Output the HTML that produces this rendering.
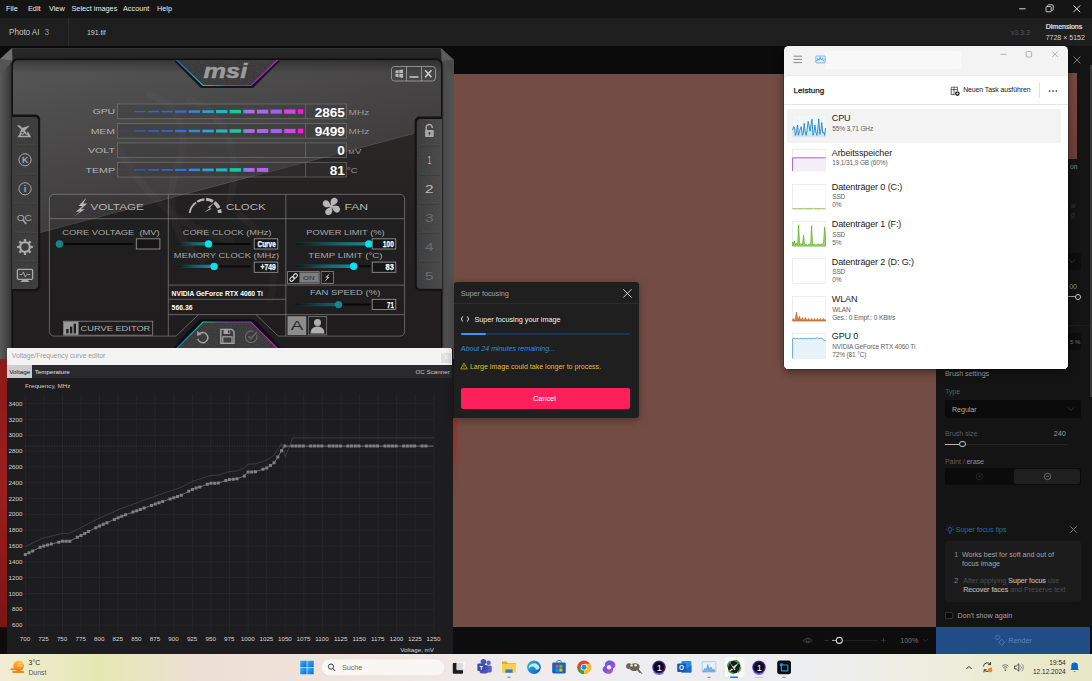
<!DOCTYPE html>
<html lang="en">
<head>
<meta charset="utf-8">
<title>Photo AI</title>
<style>
*{box-sizing:border-box;margin:0;padding:0}
html,body{width:1092px;height:681px;overflow:hidden;background:#0c0c0c}
body{position:relative;font-family:"Liberation Sans",sans-serif;font-size:7px;color:#ddd;line-height:1}
.abs,.abs *{position:absolute}
.abs .st{position:static}
.t{position:absolute;white-space:nowrap;line-height:1}
#root{position:absolute;left:0;top:0;width:1092px;height:681px;overflow:hidden}
#menubar{left:0;top:0;width:1092px;height:18px;background:#151515}
#menubar .t{top:5.2px;font-size:7.3px;color:#ececec}
#tabbar{left:0;top:18px;width:1092px;height:28px;background:#1f1f1f}
#strip{left:0;top:46px;width:1092px;height:27.5px;background:#0b0b0b}
#canvas{left:0;top:73.5px;width:936px;height:553.5px;background:#734d44}
#canvasred{left:0;top:73.5px;width:9px;height:553.5px;background:linear-gradient(180deg,#8c1a18 0,#8a1a18 50%,#9a201e 75%,#7c1513 100%)}
#canvasred2{left:452px;top:410px;width:7px;height:90px;background:linear-gradient(90deg,#a02422 0,#90342c 40%,rgba(130,60,50,0) 100%);-webkit-mask-image:linear-gradient(180deg,#000 0,#000 25%,transparent 100%);mask-image:linear-gradient(180deg,#000 0,#000 25%,transparent 100%)}
#rpanel{left:936px;top:46px;width:156px;height:581px;background:#141414}
#bbar{left:0;top:627px;width:936px;height:27px;background:#0d0d0d}
#render{left:936px;top:627px;width:154px;height:27px;background:#204d86}
#taskbar{left:0;top:654px;width:1092px;height:27px;background:linear-gradient(90deg,#f2ecd6 0,#e5e8b2 9%,#ecdfd4 18%,#f0e6e0 35%,#eeecee 50%,#edeef2 72%,#eeeee0 85%,#eaeacc 94%,#e8e8c8 100%)}
</style>
</head>
<body>
<div id="root">
<div id="menubar" class="abs">
  <span class="t" style="left:6px">File</span>
  <span class="t" style="left:28px">Edit</span>
  <span class="t" style="left:49px">View</span>
  <span class="t" style="left:71.5px">Select images</span>
  <span class="t" style="left:123px">Account</span>
  <span class="t" style="left:157px">Help</span>
</div>
<div id="tabbar" class="abs"></div>
<div id="strip" class="abs"></div>
<div id="canvas" class="abs"></div>
<div id="canvasred" class="abs"></div>
<div id="canvasred2" class="abs"></div>
<div id="rpanel" class="abs"></div>
<div id="bbar" class="abs"></div>
<div id="render" class="abs"></div>
<div id="tabc" class="abs" style="left:0;top:18px;width:1092px;height:28px">
<span class="t" id="t1" style="left:9px;top:10.6px;font-size:8.2px;color:#c2c2c2;letter-spacing:-0.06px">Photo AI</span>
<span class="t" style="left:44.6px;top:10.6px;font-size:8.2px;color:#9a9a9a">3</span>
<div style="left:67.6px;top:0;width:0.8px;height:28px;background:#2a2a2a"></div>
<span class="t" id="t2" style="left:87px;top:11.2px;font-size:7px;color:#cfcfcf;letter-spacing:-0.05px">191.tif</span>
<span class="t" id="t3" style="left:1011px;top:12px;font-size:6.9px;color:#555">v3.3.3</span>
<span class="t" id="t4" style="left:1045.7px;top:5.2px;font-size:7px;color:#e6e6e6;-webkit-text-stroke:0.2px #e6e6e6">Dimensions</span>
<span class="t" id="t5" style="left:1045.7px;top:16.4px;font-size:7px;color:#d2d2d2">7728 × 5152</span>
</div>
<svg style="position:absolute;left:1010px;top:0" width="82" height="18" viewBox="1010 0 82 18"><path d="M1019.2 8.8h6.4" stroke="#f0f0f0" stroke-width="0.9"/><rect x="1046" y="6.6" width="5.2" height="5.2" rx="0.9" fill="none" stroke="#f0f0f0" stroke-width="0.8"/><path d="M1047.6 6.4v-0.6a1 1 0 0 1 1-1h3.6a1 1 0 0 1 1 1v3.6a1 1 0 0 1 -1 1h-0.6" fill="none" stroke="#f0f0f0" stroke-width="0.8"/><path d="M1073.4 5.4l6.8 6.8M1080.2 5.4l-6.8 6.8" stroke="#f0f0f0" stroke-width="0.9"/></svg>
<div id="rp" class="abs" style="left:936px;top:46px;width:156px;height:581px">
<svg style="left:136px;top:9px" width="10" height="10" viewBox="0 0 10 10"><path d="M1.6 1.6l6.8 6.8M8.4 1.6l-6.8 6.8" stroke="#8a8a8a" stroke-width="0.9"/></svg>
<div style="left:131.4px;top:27px;width:9.4px;height:85.5px;background:linear-gradient(180deg,#7b4a41,#6d4038)"></div>
<span class="t" id="r0" style="left:134.0px;top:118.4px;font-size:6.6px;color:#8c8c8c;">on</span>
<span class="t" id="r0b" style="left:135.0px;top:157.0px;font-size:6.4px;color:#3a3a3a;font-style:italic">w</span>
<span class="t" id="r0c" style="left:135.0px;top:166.2px;font-size:6.4px;color:#3a3a3a;font-style:italic">g</span>
<div style="left:125px;top:206.5px;width:20.2px;height:17.5px;background:#0d0d0d;border-radius:2px"></div>
<svg style="left:131.6px;top:212px" width="8" height="6" viewBox="0 0 8 6"><path d="M1.2 1.6L4 4.4L6.8 1.6" fill="none" stroke="#444" stroke-width="0.8"/></svg>
<span class="t" id="r0d" style="left:133.2px;top:237.1px;font-size:7px;color:#8c8c8c;">00</span>
<div style="left:126px;top:250.2px;width:13px;height:0.9px;background:#aaa"></div>
<div style="left:138.6px;top:247.6px;width:6.2px;height:6.2px;border:1px solid #c8c8c8;border-radius:50%;background:#141414"></div>
<div style="left:0;top:279px;width:156px;height:0.7px;background:#1f1f1f"></div>
<div style="left:125px;top:286.5px;width:20.2px;height:17.5px;background:#0d0d0d;border-radius:2px"></div>
<span class="t" id="r0e" style="left:134.0px;top:292.6px;font-size:6px;color:#777;">5 %</span>
<div style="left:154.2px;top:19px;width:1.8px;height:332px;background:#383838"></div>
<span class="t" id="r1" style="left:8.9px;top:323.9px;font-size:7.2px;color:#a2a2a2;letter-spacing:-0.1px">Brush settings</span>
<span class="t" id="r2" style="left:8.9px;top:341.6px;font-size:7.2px;color:#5c5c5c;letter-spacing:-0.1px">Type</span>
<div style="left:8.9px;top:353.8px;width:136.3px;height:18.2px;background:#0b0b0b;border-radius:2px"></div>
<span class="t" id="r3" style="left:16.0px;top:359.6px;font-size:7.2px;color:#a8a8a8;letter-spacing:-0.1px">Regular</span>
<svg style="left:131.4px;top:359.6px" width="8" height="6" viewBox="0 0 8 6"><path d="M1 1.4L4 4.4L7 1.4" fill="none" stroke="#3a3a3a" stroke-width="0.8"/></svg>
<span class="t" id="r4" style="left:8.9px;top:384.0px;font-size:7.2px;color:#5c5c5c;letter-spacing:-0.1px">Brush size</span>
<span class="t" id="r5" style="left:117.7px;top:384.2px;font-size:7.2px;color:#9c9c9c;">240</span>
<div style="left:9px;top:397.6px;width:123px;height:0.8px;background:#262626"></div>
<div style="left:9px;top:397.5px;width:15px;height:1px;background:#b4b4b4"></div>
<div style="left:23.4px;top:394.8px;width:6.4px;height:6.4px;border:1.1px solid #c8c8c8;border-radius:50%;background:#141414"></div>
<span class="t" id="r6" style="left:8.9px;top:411.5px;font-size:7.2px;color:#5c5c5c;letter-spacing:-0.1px">Paint / <span class="st" style="color:#8e8e8e">erase</span></span>
<div style="left:8.9px;top:421.6px;width:136.3px;height:17.8px;background:#0b0b0b;border-radius:2px"></div>
<div style="left:77.6px;top:422.6px;width:66.6px;height:15.8px;background:#1f1f1f;border-radius:2px"></div>
<svg style="left:39px;top:426px" width="9" height="9" viewBox="0 0 9 9"><circle cx="4.5" cy="4.5" r="3.2" fill="none" stroke="#2e2e2e" stroke-width="0.7"/><path d="M3 4.5h3M4.5 3v3" stroke="#2e2e2e" stroke-width="0.6"/></svg>
<svg style="left:106.6px;top:426px" width="9" height="9" viewBox="0 0 9 9"><circle cx="4.5" cy="4.5" r="3.2" fill="none" stroke="#8a8a8a" stroke-width="0.7"/><path d="M3 4.5h3" stroke="#8a8a8a" stroke-width="0.6"/></svg>
<svg style="left:9.2px;top:478.600px" width="10" height="10" viewBox="0 0 10 10"><circle cx="5" cy="4.400" r="2" fill="none" stroke="#2a68b0" stroke-width="0.750"/><path d="M4 7.300h2M4.300 8.500h1.400" stroke="#2a68b0" stroke-width="0.700"/><path d="M0.800 4.400h1.100M8.100 4.400h1.100M5 0.400v1M2 1.500l.8.800M8 1.500l-.8.800" stroke="#2a68b0" stroke-width="0.600"/></svg>
<span class="t" id="r7" style="left:19.8px;top:479.9px;font-size:7.2px;color:#2a68b0;letter-spacing:-0.05px">Super focus tips</span>
<svg style="left:132.8px;top:478.8px" width="9" height="9" viewBox="0 0 9 9"><path d="M1.3 1.3l6.4 6.4M7.7 1.3l-6.4 6.4" stroke="#8c8c8c" stroke-width="0.8"/></svg>
<div style="left:8.9px;top:495.3px;width:136.3px;height:61px;background:#1c1c1c;border-radius:3px"></div>
<span class="t" id="r8a" style="left:18.3px;top:505.9px;font-size:7.1px;color:#8a8a8a;">1</span>
<span class="t" id="r8" style="left:26.0px;top:505.9px;font-size:7.1px;color:#a4a4a4;letter-spacing:-0.02px">Works best for soft and out of</span>
<span class="t" id="r9" style="left:26.0px;top:515.0px;font-size:7.1px;color:#a4a4a4;letter-spacing:-0.02px">focus image</span>
<span class="t" id="r10a" style="left:18.3px;top:531.9px;font-size:7.1px;color:#8a8a8a;">2</span>
<span class="t" id="r10" style="left:27.2px;top:531.9px;font-size:7.1px;color:#4c4c4c;letter-spacing:-0.02px">After applying <span class="st" style="color:#b4b4b4;-webkit-text-stroke:0.15px #b4b4b4">Super focus</span> use</span>
<span class="t" id="r11" style="left:27.2px;top:540.9px;font-size:7.1px;color:#4c4c4c;letter-spacing:-0.02px"><span class="st" style="color:#b4b4b4;-webkit-text-stroke:0.15px #b4b4b4">Recover faces</span> and Preserve text</span>
<div style="left:9.2px;top:565.5px;width:7.8px;height:7.8px;border:0.8px solid #303030;border-radius:1px;background:#0b0b0b"></div>
<span class="t" id="r12" style="left:21.6px;top:566.2px;font-size:7.2px;color:#a0a0a0;letter-spacing:-0.02px">Don't show again</span>
</div>
<svg style="position:absolute;left:994px;top:634px" width="12" height="13" viewBox="0 0 12 13"><rect x="1.6" y="1.6" width="3.6" height="3.6" transform="rotate(45 3.4 3.4)" fill="none" stroke="#5a82b6" stroke-width="0.8"/><rect x="5.6" y="6.2" width="4.2" height="4.2" transform="rotate(45 7.7 8.3)" fill="none" stroke="#5a82b6" stroke-width="0.8"/></svg>
<span class="t" id="rb" style="left:1008.3px;top:636.9px;font-size:7.2px;color:#5c84b8">Render</span>
<svg style="position:absolute;left:800px;top:632px" width="136" height="17" viewBox="800 632 136 17"><path d="M803.2 640.4q4.5-4.6 9 0q-4.5 4.6-9 0z" fill="none" stroke="#4a4a4a" stroke-width="0.8"/><circle cx="807.7" cy="640.4" r="1.5" fill="none" stroke="#4a4a4a" stroke-width="0.8"/><path d="M824.4 640.4h4.4" stroke="#3a3a3a" stroke-width="0.8"/><path d="M832 640.4h4" stroke="#c8c8c8" stroke-width="0.9"/><path d="M842.6 640.4h35" stroke="#2a2a2a" stroke-width="0.8"/><circle cx="839.3" cy="640.4" r="3" fill="#0d0d0d" stroke="#d0d0d0" stroke-width="1.1"/><path d="M881 640.4h5M883.5 637.9v5" stroke="#3a3a3a" stroke-width="0.8"/><path d="M922.8 639l2.6 2.6 2.6-2.6" fill="none" stroke="#333" stroke-width="0.8"/></svg>
<span class="t" id="bz" style="left:900.3px;top:637px;font-size:7px;color:#7a7a7a">100%</span>
<svg id="msi" style="position:absolute;left:0;top:48px" width="454" height="312" viewBox="0 48 454 312" font-family="Liberation Sans, sans-serif">
<defs>
  <linearGradient id="gL" x1="0" x2="1" y1="0" y2="0"><stop offset="0" stop-color="#5a5a5a"/><stop offset="0.75" stop-color="#3d3d3d"/><stop offset="1" stop-color="#2c2c2c"/></linearGradient>
  <linearGradient id="gR" x1="0" x2="1" y1="0" y2="0"><stop offset="0" stop-color="#3a3a3a"/><stop offset="0.25" stop-color="#4b4b4b"/><stop offset="1" stop-color="#535353"/></linearGradient>
  <linearGradient id="gTop" x1="0" x2="0" y1="0" y2="1"><stop offset="0" stop-color="#3a3a3a"/><stop offset="0.12" stop-color="#282828"/><stop offset="1" stop-color="#232323"/></linearGradient>
  <linearGradient id="gIn" gradientUnits="userSpaceOnUse" x1="13" y1="61" x2="77" y2="308"><stop offset="0" stop-color="#575656"/><stop offset="1" stop-color="#343232"/></linearGradient>
  <linearGradient id="gDark" x1="0" x2="0" y1="0" y2="1"><stop offset="0" stop-color="#2a2727"/><stop offset="0.4" stop-color="#232121"/><stop offset="1" stop-color="#1f1d1d"/></linearGradient>
  <linearGradient id="gRainbowT" x1="176" x2="278" y1="0" y2="0" gradientUnits="userSpaceOnUse"><stop offset="0" stop-color="#1f5fd8"/><stop offset="0.27" stop-color="#18c8a8"/><stop offset="0.5" stop-color="#6a48d0"/><stop offset="0.75" stop-color="#9a2cc8"/><stop offset="1" stop-color="#d818c8"/></linearGradient>
  <linearGradient id="gTealFade" x1="0" x2="1" y1="0" y2="0"><stop offset="0" stop-color="#17888f" stop-opacity="0.12"/><stop offset="0.5" stop-color="#178e96" stop-opacity="0.7"/><stop offset="1" stop-color="#17a0a8"/></linearGradient>
  <linearGradient id="gSeg10" x1="0" x2="1" y1="0" y2="0"><stop offset="0" stop-color="#5a90d8"/><stop offset="0.6" stop-color="#b468f0"/><stop offset="1" stop-color="#c060f4"/></linearGradient>
  <linearGradient id="gTopSh" x1="0" x2="0" y1="0" y2="1"><stop offset="0" stop-color="#000" stop-opacity="0.32"/><stop offset="1" stop-color="#000" stop-opacity="0"/></linearGradient>
  <linearGradient id="gRT" x1="0" x2="1" y1="0" y2="0"><stop offset="0" stop-color="#3b3a3a"/><stop offset="1" stop-color="#494848"/></linearGradient>
  <clipPath id="cIn"><rect x="13" y="60.200" width="428" height="291" rx="5"/></clipPath>
  <filter id="noise" x="0" y="0" width="100%" height="100%"><feTurbulence type="fractalNoise" baseFrequency="0.9" numOctaves="2" seed="3" result="n"/><feColorMatrix type="matrix" values="0 0 0 0 0.5  0 0 0 0 0.5  0 0 0 0 0.5  0.35 0.35 0.35 0 -0.35"/><feComposite in2="SourceGraphic" operator="in"/></filter>
</defs>
<polygon points="12,48 441,48 454,60 454,359 0,359 0,59" fill="#262626"/>
<rect x="0" y="59" width="12.5" height="300" fill="url(#gL)"/>
<rect x="441.5" y="60" width="12.5" height="299" fill="url(#gR)"/>
<polygon points="12,48 441,48 441,60 12,60" fill="url(#gTop)"/>
<polygon points="0,59 12,48 12.5,61" fill="#707070"/><polygon points="0,59 12.5,61 0,75" fill="#555"/>
<polygon points="441,48 454,60 441.5,61" fill="#5c5c5c"/><polygon points="454,60 441.5,61 454,76" fill="#4a4a4a"/>
<rect x="11.5" y="58.600" width="431" height="293" rx="6" fill="#0f0f0f"/>
<rect x="13" y="60.200" width="428" height="291" rx="5" fill="url(#gIn)"/>
<rect x="13" y="60.200" width="428" height="13" rx="5" fill="url(#gTopSh)"/>
<g clip-path="url(#cIn)"><polygon points="13,240 441,126.500 441,352 13,352" fill="url(#gDark)"/><polygon points="13,239.300 441,125.800 441,126.800 13,240.300" fill="#6a6868" opacity="0.4"/>
<g fill="none" stroke="#8a8888" stroke-opacity="0.07" stroke-width="7" stroke-linecap="round"><path d="M150 95c30 10 40 40 28 70s-10 70 25 95"/><path d="M190 100c40 15 50 60 40 100"/><path d="M120 150c20 40 60 80 110 90"/><path d="M240 215c25 20 40 50 30 85"/></g></g>
<polygon points="174,61 280,61 253,88 201,88" fill="#0c0c0c" opacity="0.85"/>
<polygon points="176.5,60 277.5,60 251,85.5 203,85.5" fill="#363636"/>
<polygon points="176.5,60 277.5,60 251,85.5 203,85.5" fill="#888" filter="url(#noise)" opacity="0.3"/>
<polyline points="176.5,60 203,85.5 251,85.5 277.5,60" fill="none" stroke="url(#gRainbowT)" stroke-width="1.1"/>
<text x="203.6" y="78" font-size="20.6" font-weight="bold" font-style="italic" fill="#9c9c9c" stroke="#9c9c9c" stroke-width="0.5" textLength="43.6" lengthAdjust="spacingAndGlyphs">msi</text>
<rect x="391.5" y="66.5" width="44" height="14.5" rx="3" fill="none" stroke="#9a9a9a" stroke-width="0.9"/>
<path d="M406.5 66.5V81M421.5 66.5V81" stroke="#9a9a9a" stroke-width="0.9"/>
<g fill="#b8b8b8"><polygon points="395.5,70.6 398.6,70.1 398.6,73.3 395.5,73.3"/><polygon points="399.3,70 403,69.4 403,73.3 399.3,73.3"/><polygon points="395.5,74 398.6,74 398.6,77.2 395.5,76.7"/><polygon points="399.3,74 403,74 403,77.9 399.3,77.3"/></g>
<rect x="409.5" y="76.2" width="9" height="1.6" fill="#c4c4c4"/>
<path d="M425.2 70.2l6.2 7M431.4 70.2l-6.2 7" stroke="#d0d0d0" stroke-width="1.5"/>
<rect x="117.5" y="104" width="229" height="14.7" fill="#3a3838" fill-opacity="0.35" stroke="#8a8888" stroke-opacity="0.6" stroke-width="0.8"/>
<path d="M305.6 104v14.7" stroke="#8a8888" stroke-opacity="0.6" stroke-width="0.8"/>
<text x="92.7" y="114.2" font-size="7.2" fill="#b4b4b4" textLength="22.3" lengthAdjust="spacingAndGlyphs">GPU</text>
<rect x="120.60" y="111.20" width="11.35" height="0.8" fill="#3a4a94" opacity="0.55"/>
<rect x="134.23" y="111.00" width="11.35" height="1.2" fill="#3a5cd0" opacity="1"/>
<rect x="147.86" y="110.85" width="11.35" height="1.5" fill="#3a5fd6" opacity="1"/>
<rect x="161.49" y="110.75" width="11.35" height="1.7" fill="#3a62da" opacity="1"/>
<rect x="175.12" y="110.50" width="11.35" height="2.2" fill="#3070e4" opacity="1"/>
<rect x="188.75" y="110.35" width="11.35" height="2.5" fill="#3088e4" opacity="1"/>
<rect x="202.38" y="110.25" width="11.35" height="2.7" fill="#2ea0dc" opacity="1"/>
<rect x="216.01" y="110.05" width="11.35" height="3.1" fill="#1fb8c4" opacity="1"/>
<rect x="229.64" y="109.85" width="11.35" height="3.5" fill="#18c8a0" opacity="1"/>
<rect x="243.27" y="109.75" width="11.35" height="3.7" fill="url(#gSeg10)"/>
<rect x="256.90" y="109.65" width="11.35" height="3.9" fill="#b062f2" opacity="1"/>
<rect x="270.53" y="109.55" width="11.35" height="4.1" fill="#a25ef4" opacity="1"/>
<rect x="284.16" y="109.45" width="11.35" height="4.3" fill="#d443f0" opacity="1"/>
<rect x="297.79" y="109.30" width="5.5" height="4.6" fill="#ff14e0" opacity="1"/>
<text x="344.6" y="116.5" font-size="13.6" font-weight="bold" fill="#fff" text-anchor="end" letter-spacing="-0.1">2865</text>
<rect x="117.5" y="123.4" width="229" height="14.7" fill="#3a3838" fill-opacity="0.35" stroke="#8a8888" stroke-opacity="0.6" stroke-width="0.8"/>
<path d="M305.6 123.4v14.7" stroke="#8a8888" stroke-opacity="0.6" stroke-width="0.8"/>
<text x="90.7" y="133.6" font-size="7.2" fill="#b4b4b4" textLength="24.3" lengthAdjust="spacingAndGlyphs">MEM</text>
<rect x="120.60" y="130.60" width="11.35" height="0.8" fill="#3a4a94" opacity="0.55"/>
<rect x="134.23" y="130.40" width="11.35" height="1.2" fill="#3a5cd0" opacity="1"/>
<rect x="147.86" y="130.25" width="11.35" height="1.5" fill="#3a5fd6" opacity="1"/>
<rect x="161.49" y="130.15" width="11.35" height="1.7" fill="#3a62da" opacity="1"/>
<rect x="175.12" y="129.90" width="11.35" height="2.2" fill="#3070e4" opacity="1"/>
<rect x="188.75" y="129.75" width="11.35" height="2.5" fill="#3088e4" opacity="1"/>
<rect x="202.38" y="129.65" width="11.35" height="2.7" fill="#2ea0dc" opacity="1"/>
<rect x="216.01" y="129.45" width="11.35" height="3.1" fill="#1fb8c4" opacity="1"/>
<rect x="229.64" y="129.25" width="11.35" height="3.5" fill="#18c8a0" opacity="1"/>
<rect x="243.27" y="129.15" width="11.35" height="3.7" fill="url(#gSeg10)"/>
<rect x="256.90" y="129.05" width="11.35" height="3.9" fill="#b062f2" opacity="1"/>
<rect x="270.53" y="128.95" width="11.35" height="4.1" fill="#a25ef4" opacity="1"/>
<rect x="284.16" y="128.85" width="11.35" height="4.3" fill="#d443f0" opacity="1"/>
<rect x="297.79" y="128.70" width="5.5" height="4.6" fill="#ff14e0" opacity="1"/>
<text x="344.6" y="135.9" font-size="13.6" font-weight="bold" fill="#fff" text-anchor="end" letter-spacing="-0.1">9499</text>
<rect x="117.5" y="142.9" width="229" height="14.7" fill="#3a3838" fill-opacity="0.35" stroke="#8a8888" stroke-opacity="0.6" stroke-width="0.8"/>
<path d="M305.6 142.9v14.7" stroke="#8a8888" stroke-opacity="0.6" stroke-width="0.8"/>
<text x="88" y="153.1" font-size="7.2" fill="#b4b4b4" textLength="27.0" lengthAdjust="spacingAndGlyphs">VOLT</text>
<text x="344.6" y="155.4" font-size="13.6" font-weight="bold" fill="#fff" text-anchor="end" letter-spacing="-0.1">0</text>
<rect x="117.5" y="162.3" width="229" height="14.7" fill="#3a3838" fill-opacity="0.35" stroke="#8a8888" stroke-opacity="0.6" stroke-width="0.8"/>
<path d="M305.6 162.3v14.7" stroke="#8a8888" stroke-opacity="0.6" stroke-width="0.8"/>
<text x="85.5" y="172.5" font-size="7.2" fill="#b4b4b4" textLength="29.5" lengthAdjust="spacingAndGlyphs">TEMP</text>
<rect x="120.60" y="169.50" width="11.35" height="0.8" fill="#3a4a94" opacity="0.55"/>
<rect x="134.23" y="169.30" width="11.35" height="1.2" fill="#3a5cd0" opacity="1"/>
<rect x="147.86" y="169.15" width="11.35" height="1.5" fill="#3a5fd6" opacity="1"/>
<rect x="161.49" y="169.05" width="11.35" height="1.7" fill="#3a62da" opacity="1"/>
<rect x="175.12" y="168.80" width="11.35" height="2.2" fill="#3070e4" opacity="1"/>
<rect x="188.75" y="168.65" width="11.35" height="2.5" fill="#3088e4" opacity="1"/>
<rect x="202.38" y="168.55" width="11.35" height="2.7" fill="#2ea0dc" opacity="1"/>
<rect x="216.01" y="168.35" width="11.35" height="3.1" fill="#1fb8c4" opacity="1"/>
<rect x="229.64" y="168.15" width="11.35" height="3.5" fill="#18c8a0" opacity="1"/>
<rect x="243.27" y="168.05" width="11.35" height="3.7" fill="url(#gSeg10)"/>
<rect x="256.90" y="167.95" width="11.35" height="3.9" fill="#b062f2" opacity="1"/>
<text x="344.6" y="174.8" font-size="13.6" font-weight="bold" fill="#fff" text-anchor="end" letter-spacing="-0.1">81</text>
<text x="348.6" y="115.0" font-size="7.4" fill="#9c9c9c" textLength="20.6" lengthAdjust="spacingAndGlyphs">MHz</text>
<text x="348.6" y="134.4" font-size="7.4" fill="#9c9c9c" textLength="20.6" lengthAdjust="spacingAndGlyphs">MHz</text>
<text x="348.6" y="153.8" font-size="7.4" fill="#9c9c9c"><tspan font-size="5.2" textLength="6" lengthAdjust="spacingAndGlyphs">M</tspan><tspan dx="0.4" textLength="6.4" lengthAdjust="spacingAndGlyphs">V</tspan></text>
<text x="347" y="173.2" font-size="7.4" fill="#9c9c9c" textLength="10.4" lengthAdjust="spacingAndGlyphs">°C</text>
<path d="M12 114.500H35.200a5 5 0 0 1 5 5V286.400a5 5 0 0 1 -5 5H12z" fill="#141313"/>
<path d="M12 117H34.400a3.800 3.800 0 0 1 3.800 3.800V285.300a3.800 3.800 0 0 1 -3.800 3.800H12z" fill="#3b3a3a"/>
<path d="M12 117H34.400a3.800 3.800 0 0 1 3.800 3.800V285.300a3.800 3.800 0 0 1 -3.800 3.800H12z" fill="#999" filter="url(#noise)" opacity="0.18"/>
<path d="M15 145.2H35" stroke="#5a5959" stroke-width="0.7"/><path d="M15 145.89999999999998H35" stroke="#2a2929" stroke-width="0.5"/>
<path d="M15 174.3H35" stroke="#5a5959" stroke-width="0.7"/><path d="M15 175.0H35" stroke="#2a2929" stroke-width="0.5"/>
<path d="M15 203.3H35" stroke="#5a5959" stroke-width="0.7"/><path d="M15 204.0H35" stroke="#2a2929" stroke-width="0.5"/>
<path d="M15 232.3H35" stroke="#5a5959" stroke-width="0.7"/><path d="M15 233.0H35" stroke="#2a2929" stroke-width="0.5"/>
<path d="M15 261.2H35" stroke="#5a5959" stroke-width="0.7"/><path d="M15 261.9H35" stroke="#2a2929" stroke-width="0.5"/>
<path d="M442 116.500H419.600a5 5 0 0 0 -5 5V286a5 5 0 0 0 5 5H442z" fill="#141313"/>
<path d="M442 119H420.600a3.800 3.800 0 0 0 -3.800 3.800V285a3.800 3.800 0 0 0 3.800 3.800H442z" fill="url(#gRT)"/>
<path d="M442 119H420.600a3.800 3.800 0 0 0 -3.800 3.800V285a3.800 3.800 0 0 0 3.800 3.800H442z" fill="#999" filter="url(#noise)" opacity="0.18"/>
<path d="M420.5 145.2H440" stroke="#5a5959" stroke-width="0.7"/><path d="M420.5 145.89999999999998H440" stroke="#2a2929" stroke-width="0.5"/>
<path d="M420.5 174.3H440" stroke="#5a5959" stroke-width="0.7"/><path d="M420.5 175.0H440" stroke="#2a2929" stroke-width="0.5"/>
<path d="M420.5 203.3H440" stroke="#5a5959" stroke-width="0.7"/><path d="M420.5 204.0H440" stroke="#2a2929" stroke-width="0.5"/>
<path d="M420.5 232.3H440" stroke="#5a5959" stroke-width="0.7"/><path d="M420.5 233.0H440" stroke="#2a2929" stroke-width="0.5"/>
<path d="M420.5 261.2H440" stroke="#5a5959" stroke-width="0.7"/><path d="M420.5 261.9H440" stroke="#2a2929" stroke-width="0.5"/>
<text x="429.4" y="164.2" font-size="11.5" fill="#b8b8b8" text-anchor="middle" textLength="4" lengthAdjust="spacingAndGlyphs">1</text>
<text x="429.4" y="193.0" font-size="11.5" fill="#b8b8b8" text-anchor="middle" textLength="8.6" lengthAdjust="spacingAndGlyphs">2</text>
<text x="429.4" y="222.2" font-size="11.5" fill="#6c6c6c" text-anchor="middle" textLength="8.6" lengthAdjust="spacingAndGlyphs">3</text>
<text x="429.4" y="251.2" font-size="11.5" fill="#6c6c6c" text-anchor="middle" textLength="8.6" lengthAdjust="spacingAndGlyphs">4</text>
<text x="429.4" y="279.8" font-size="11.5" fill="#6c6c6c" text-anchor="middle" textLength="8.6" lengthAdjust="spacingAndGlyphs">5</text>
<g transform="translate(429.4 131)"><path d="M-3.2 -0.8V-3.6a3 3 0 0 1 6 0v0.6" fill="none" stroke="#a8a8a8" stroke-width="1.5"/><rect x="-4.3" y="-0.9" width="8.6" height="6.9" rx="0.8" fill="#a8a8a8"/><circle cx="0" cy="2" r="1.1" fill="#413f3f"/><rect x="-0.5" y="2" width="1" height="2.3" fill="#413f3f"/></g>
<g fill="#a8a8a8"><polygon points="17.3,124.9 19.8,125.5 26.6,132.4 25.3,133.5 18.1,126.4"/><polygon points="21.6,128 29.8,125.6 24.6,131"/><polygon points="21.4,128.9 23.6,131.2 19.4,133.8"/><path d="M17.4 137.2L20.8 132.2L22.4 134.2L24.6 130.8L26.4 133.8L28 131.6L31.2 137.2Z M20.4 135.8h7.6l-1-1.600-1 .900-1.400-2-1.800 2.200-1.200-1.200z" fill-rule="evenodd"/></g>
<circle cx="25" cy="159.8" r="6.1" fill="none" stroke="#a8a8a8" stroke-width="1"/><text x="25.1" y="163" font-size="8.6" font-weight="bold" fill="#a8a8a8" text-anchor="middle">K</text>
<circle cx="25" cy="188.8" r="6.1" fill="none" stroke="#a8a8a8" stroke-width="1"/><text x="25" y="192.4" font-size="9.6" font-weight="bold" fill="#a8a8a8" text-anchor="middle">i</text>
<text x="16.8" y="220.6" font-size="9.6" fill="#a8a8a8" textLength="15" lengthAdjust="spacingAndGlyphs">OC</text><path d="M22.6 219.6l3.6 4.4" stroke="#a8a8a8" stroke-width="1.6"/>
<g transform="translate(25 247)"><path d="M5.77 -1.23 L7.92 -1.12 L7.92 1.12 L5.77 1.23 L4.95 3.21 L6.39 4.81 L4.81 6.39 L3.21 4.95 L1.23 5.77 L1.12 7.92 L-1.12 7.92 L-1.23 5.77 L-3.21 4.95 L-4.81 6.39 L-6.39 4.81 L-4.95 3.21 L-5.77 1.23 L-7.92 1.12 L-7.92 -1.12 L-5.77 -1.23 L-4.95 -3.21 L-6.39 -4.81 L-4.81 -6.39 L-3.21 -4.95 L-1.23 -5.77 L-1.12 -7.92 L1.12 -7.92 L1.23 -5.77 L3.21 -4.95 L4.81 -6.39 L6.39 -4.81 L4.95 -3.21Z M3.700 0a3.700 3.700 0 1 0 -7.400 0a3.700 3.700 0 1 0 7.400 0Z" fill="#a8a8a8" fill-rule="evenodd"/></g>
<g transform="translate(25 275.5)"><rect x="-7.6" y="-6.2" width="15.2" height="10" rx="1" fill="none" stroke="#a8a8a8" stroke-width="1.3"/><path d="M-5.5 -1h2.6l1.3-2.6 1.8 5 1.5-2.4h3.6" fill="none" stroke="#a8a8a8" stroke-width="0.9"/><polygon points="-2,3.8 2,3.8 4.6,6.6 -4.6,6.6" fill="#a8a8a8"/></g>
<path d="M54 194.3H400a4.6 4.6 0 0 1 4.6 4.6V331.5a4.6 4.6 0 0 1 -4.6 4.6H278.3L256 314.6H198.5L176 336.1H54a4.6 4.6 0 0 1 -4.6 -4.6V198.9A4.6 4.6 0 0 1 54 194.3Z" fill="#1c1a1a" fill-opacity="0.18" stroke="#8c8a8a" stroke-opacity="0.75" stroke-width="0.85"/>
<g stroke="#8c8a8a" stroke-opacity="0.75" stroke-width="0.85" fill="none"><path d="M49.4 218.7H404.6"/><path d="M168.3 194.3V336"/><path d="M285.8 194.3V336"/><path d="M168.3 285.1H404.6"/><path d="M168.3 299.3H285.8"/><path d="M168.3 314.6H198.5"/><path d="M256 314.6H404.6"/></g>
<polygon points="86.5,197.5 78.5,206 82.5,206 75.8,211.8 80.2,211.6 73.4,217 84.8,209.2 80.8,209.2 87.2,203.6 83.2,203.6" fill="#b6b6b6"/>
<text x="90.4" y="210" font-size="9.8" fill="#b6b6b6" textLength="53.4" lengthAdjust="spacingAndGlyphs">VOLTAGE</text>
<g fill="none" stroke="#b6b6b6"><path d="M189.6 213A15.8 15.8 0 0 1 196 202.600" stroke-width="1.800"/><path d="M197.200 201.800A15.800 15.800 0 0 1 204.400 199.400" stroke-width="2.400"/><path d="M206 199.300A15.800 15.800 0 0 1 213 201.400" stroke-width="3"/><path d="M214.400 202.300A15.800 15.800 0 0 1 218.800 208" stroke-width="3.600"/><path d="M219.300 209.400A15.800 15.800 0 0 1 219.800 213" stroke-width="3.800"/></g>
<polygon points="213.6,203 207.6,207.6 210,208 204.2,212.6 211.8,208.8 209.6,208.2" fill="#b6b6b6"/>
<text x="226" y="210" font-size="9.8" fill="#b6b6b6" textLength="39.7" lengthAdjust="spacingAndGlyphs">CLOCK</text>
<g transform="translate(331.4 206.4) scale(1.1)" fill="#b6b6b6"><path d="M0 -0.6C-2.6 -2.4 -3.4 -6.4 -0.6 -8.2C1.8 -9.3 4.4 -7.6 3.6 -4.8C3 -3 1.6 -1.6 0 -0.6Z" transform="rotate(20)"/><path d="M0 -0.6C-2.6 -2.4 -3.4 -6.4 -0.6 -8.2C1.8 -9.3 4.4 -7.6 3.6 -4.8C3 -3 1.6 -1.6 0 -0.6Z" transform="rotate(110)"/><path d="M0 -0.6C-2.6 -2.4 -3.4 -6.4 -0.6 -8.2C1.8 -9.3 4.4 -7.6 3.6 -4.8C3 -3 1.6 -1.6 0 -0.6Z" transform="rotate(200)"/><path d="M0 -0.6C-2.6 -2.4 -3.4 -6.4 -0.6 -8.2C1.8 -9.3 4.4 -7.6 3.6 -4.8C3 -3 1.6 -1.6 0 -0.6Z" transform="rotate(290)"/><circle r="1.5"/></g>
<text x="344.4" y="210" font-size="9.8" fill="#b6b6b6" textLength="23.6" lengthAdjust="spacingAndGlyphs">FAN</text>
<text x="62.2" y="234.7" font-size="6.5" fill="#a8a8a8" textLength="97.5" lengthAdjust="spacingAndGlyphs" xml:space="preserve">CORE VOLTAGE  (MV)</text>
<text x="182.8" y="234.7" font-size="6.5" fill="#a8a8a8" textLength="88.5" lengthAdjust="spacingAndGlyphs" xml:space="preserve">CORE CLOCK (MHz)</text>
<text x="173.8" y="257.9" font-size="6.5" fill="#a8a8a8" textLength="105.4" lengthAdjust="spacingAndGlyphs" xml:space="preserve">MEMORY CLOCK (MHz)</text>
<text x="306.3" y="234.7" font-size="6.5" fill="#a8a8a8" textLength="78.3" lengthAdjust="spacingAndGlyphs" xml:space="preserve">POWER LIMIT (%)</text>
<text x="308.2" y="257.9" font-size="6.5" fill="#a8a8a8" textLength="74.4" lengthAdjust="spacingAndGlyphs" xml:space="preserve">TEMP LIMIT (°C)</text>
<text x="309.9" y="295.4" font-size="6.5" fill="#a8a8a8" textLength="70.4" lengthAdjust="spacingAndGlyphs" xml:space="preserve">FAN SPEED (%)</text>
<rect x="61" y="243.0" width="72.5" height="2" rx="1" fill="#090808"/>
<circle cx="59.4" cy="244" r="3.7" fill="#16868c"/>
<rect x="177" y="242.9" width="74" height="2" rx="1" fill="#090808"/>
<rect x="177" y="242.2" width="31.5" height="3.4" rx="1.7" fill="url(#gTealFade)" opacity="0.9"/>
<circle cx="208.5" cy="243.9" r="3.7" fill="#06e4ea"/>
<rect x="177" y="265.4" width="74" height="2" rx="1" fill="#090808"/>
<rect x="177" y="264.7" width="37.1" height="3.4" rx="1.7" fill="url(#gTealFade)" opacity="0.9"/>
<circle cx="214.1" cy="266.4" r="3.7" fill="#06e4ea"/>
<rect x="295.5" y="242.9" width="75.5" height="2" rx="1" fill="#090808"/>
<rect x="295.5" y="242.2" width="73.3" height="3.4" rx="1.7" fill="url(#gTealFade)" opacity="0.9"/>
<circle cx="368.8" cy="243.9" r="3.7" fill="#06e4ea"/>
<rect x="295.5" y="265.2" width="75.5" height="2" rx="1" fill="#090808"/>
<rect x="295.5" y="264.5" width="58.2" height="3.4" rx="1.7" fill="url(#gTealFade)" opacity="0.9"/>
<circle cx="353.7" cy="266.2" r="3.7" fill="#06e4ea"/>
<rect x="295.5" y="303.6" width="75.5" height="2" rx="1" fill="#090808"/>
<rect x="295.5" y="302.9" width="43.1" height="3.4" rx="1.7" fill="url(#gTealFade)" opacity="0.6"/>
<circle cx="338.6" cy="304.6" r="3.7" fill="#16868c"/>
<rect x="136.3" y="238.8" width="23.6" height="10.2" fill="#171616" stroke="#9a9898" stroke-width="0.85"/>
<rect x="254.2" y="238.8" width="23.6" height="10.2" fill="#171616" stroke="#9a9898" stroke-width="0.85"/>
<text x="275.8" y="247.0" font-size="8.3" font-weight="bold" fill="#fff" stroke="#fff" stroke-width="0.25" text-anchor="end" textLength="18.3" lengthAdjust="spacingAndGlyphs">Curve</text>
<rect x="254.2" y="262.1" width="23.6" height="10.2" fill="#171616" stroke="#9a9898" stroke-width="0.85"/>
<text x="275.8" y="270.3" font-size="8.3" font-weight="bold" fill="#fff" stroke="#fff" stroke-width="0.25" text-anchor="end" textLength="15.3" lengthAdjust="spacingAndGlyphs">+749</text>
<rect x="372.2" y="238.8" width="23.6" height="10.2" fill="#171616" stroke="#9a9898" stroke-width="0.85"/>
<text x="393.8" y="247.0" font-size="8.3" font-weight="bold" fill="#fff" stroke="#fff" stroke-width="0.25" text-anchor="end" textLength="11" lengthAdjust="spacingAndGlyphs">100</text>
<rect x="372.2" y="262.1" width="23.6" height="10.2" fill="#171616" stroke="#9a9898" stroke-width="0.85"/>
<text x="393.8" y="270.3" font-size="8.3" font-weight="bold" fill="#fff" stroke="#fff" stroke-width="0.25" text-anchor="end" textLength="8.2" lengthAdjust="spacingAndGlyphs">83</text>
<rect x="372.2" y="299.3" width="23.6" height="10.2" fill="#171616" stroke="#9a9898" stroke-width="0.85"/>
<text x="393.8" y="307.5" font-size="8.3" font-weight="bold" fill="#fff" stroke="#fff" stroke-width="0.25" text-anchor="end" textLength="6.8" lengthAdjust="spacingAndGlyphs">71</text>
<text x="171.6" y="295.5" font-size="7.3" font-weight="bold" fill="#fff" textLength="91.2" lengthAdjust="spacingAndGlyphs" xml:space="preserve">NVIDIA GeForce RTX 4060 Ti</text>
<text x="171.6" y="310.2" font-size="7.3" font-weight="bold" fill="#fff" textLength="21" lengthAdjust="spacingAndGlyphs">566.36</text>
<rect x="287.6" y="271.6" width="31.6" height="11.8" fill="#1c1b1b" stroke="#8a8888" stroke-width="0.8"/>
<rect x="299.4" y="272.4" width="19.4" height="10.2" fill="#7e7e7e"/>
<text x="303" y="280" font-size="6" fill="#2a2a2a" textLength="11.6" lengthAdjust="spacingAndGlyphs">ON</text>
<g fill="none" stroke="#d6d6d6" stroke-width="1.1" transform="translate(293.6 277.5) rotate(-45)"><rect x="-4.6" y="-1.7" width="5" height="3.4" rx="1.7"/><rect x="-0.4" y="-1.7" width="5" height="3.4" rx="1.7"/></g>
<rect x="321.2" y="271.6" width="12.2" height="11.8" fill="#1c1b1b" stroke="#8a8888" stroke-width="0.8"/>
<polygon points="330,273 325.4,277.4 327.4,277.4 324,282.2 329.6,277 327.6,277 " fill="#c8c8c8"/>
<rect x="287.5" y="316.2" width="18.8" height="18.8" fill="#8c8c8c"/>
<text x="297" y="330.4" font-size="13" fill="#2c2c2c" text-anchor="middle" textLength="12.5" lengthAdjust="spacingAndGlyphs">A</text>
<rect x="308.3" y="316.4" width="18.4" height="18.4" fill="#232222" stroke="#7c7a7a" stroke-width="0.8"/>
<circle cx="317.5" cy="322.6" r="3.5" fill="#b0b0b0"/><path d="M310.6 333.6c0-5 3-7 6.9-7s6.9 2 6.9 7z" fill="#b0b0b0"/>
<rect x="63.5" y="321.2" width="89.2" height="14" fill="none" stroke="#8a8888" stroke-width="0.8"/>
<rect x="63.9" y="321.6" width="14.6" height="13.2" fill="#9a9a9a"/>
<g fill="#1e1e1e"><rect x="66.2" y="329" width="2.4" height="4.4"/><rect x="69.9" y="326.6" width="2.4" height="6.8"/><rect x="73.6" y="323.6" width="2.4" height="9.8"/></g>
<text x="80.6" y="330.9" font-size="7.3" fill="#b4b4b4" textLength="69.7" lengthAdjust="spacingAndGlyphs">CURVE EDITOR</text>
<polygon points="172,349 199.5,319.5 254.5,319.5 282,349" fill="#0c0c0c" opacity="0.85"/>
<polygon points="176,349 203,322 251,322 278,349" fill="#363636"/>
<polygon points="176,349 203,322 251,322 278,349" fill="#888" filter="url(#noise)" opacity="0.3"/>
<polyline points="176,349 203,322 251,322 278,349" fill="none" stroke="url(#gRainbowT)" stroke-width="1.1"/>
<g transform="translate(202.8 337.6)" fill="none" stroke="#a2a2a2" stroke-width="1.5"><path d="M-3.6 -3.6A5.1 5.1 0 1 1 -5 1.2"/><polygon points="-5.8,-6.6 -5.6,-1.6 -1,-3.4" fill="#a2a2a2" stroke="none"/></g>
<g transform="translate(227.4 336.4)"><path d="M-6.6 -7H4.4L6.6 -4.8V7H-6.6Z" fill="none" stroke="#a2a2a2" stroke-width="1.4"/><rect x="-3.8" y="-7" width="6.6" height="4.6" fill="#a2a2a2"/><rect x="0.6" y="-6.2" width="1.4" height="3" fill="#3b3b3b"/><rect x="-4.6" y="0.4" width="9.2" height="6.6" fill="none" stroke="#a2a2a2" stroke-width="1.2"/></g>
<g transform="translate(251 336.6)" fill="none" stroke="#6a6a6a" stroke-width="1.2"><path d="M5.6 -1.8A5.8 5.8 0 1 1 2.4 -5.2"/><path d="M-2.6 -0.4L-0.2 2.2L5.8 -4.6" stroke-width="1.4"/></g>
</svg>
<div id="curve" class="abs" style="left:7px;top:348.3px;width:445.6px;height:305.7px;background:#1d1d1f;overflow:hidden">
<div style="left:0;top:0;width:445.1px;height:17.2px;background:#f3f3f3;border-radius:0 1.5px 0 0"></div>
<span class="t" style="left:4.8px;top:5px;font-size:6.75px;color:#9b9b9b">Voltage/Frequency curve editor</span>
<div style="left:434.1px;top:4.5px;width:9.7px;height:9.9px;background:#e0e0e0"></div><span class="t" style="left:437.2px;top:5.4px;font-size:6.5px;color:#fafafa">x</span>
<div style="left:0;top:17.2px;width:445.1px;height:12.3px;background:#2a2a2c"></div>
<div style="left:0;top:17.2px;width:24.7px;height:12.3px;background:#cdcdcd"></div>
<span class="t" style="left:2.3px;top:20.4px;font-size:6.25px;color:#111">Voltage</span>
<span class="t" style="left:27.7px;top:20.4px;font-size:6.25px;color:#e0e0e0">Temperature</span>
<span class="t" style="left:408.4px;top:20.4px;font-size:6.25px;color:#c8c8c8">OC Scanner</span>
</div>
<svg id="chart" style="position:absolute;left:0;top:378px" width="454" height="276" viewBox="0 378 454 276" font-family="Liberation Sans, sans-serif" font-size="6.25">
<path d="M25.27 394V633 M43.84 394V633 M62.41 394V633 M80.98 394V633 M99.55 394V633 M118.12 394V633 M136.69 394V633 M155.26 394V633 M173.83 394V633 M192.40 394V633 M210.97 394V633 M229.54 394V633 M248.11 394V633 M266.68 394V633 M285.25 394V633 M303.82 394V633 M322.39 394V633 M340.96 394V633 M359.53 394V633 M378.10 394V633 M396.67 394V633 M415.24 394V633 M433.81 394V633 M25.27 403.60H434 M25.27 419.42H434 M25.27 435.24H434 M25.27 451.06H434 M25.27 466.88H434 M25.27 482.70H434 M25.27 498.52H434 M25.27 514.34H434 M25.27 530.16H434 M25.27 545.98H434 M25.27 561.80H434 M25.27 577.62H434 M25.27 593.44H434 M25.27 609.26H434 M25.27 625.08H434" stroke="#2b2b2e" stroke-width="0.65" fill="none"/>
<text x="25" y="388" fill="#d0d0d0">Frequency, MHz</text>
<text x="22.4" y="405.7" fill="#d6d6d6" text-anchor="end">3400</text>
<text x="22.4" y="421.5" fill="#d6d6d6" text-anchor="end">3200</text>
<text x="22.4" y="437.3" fill="#d6d6d6" text-anchor="end">3000</text>
<text x="22.4" y="453.2" fill="#d6d6d6" text-anchor="end">2800</text>
<text x="22.4" y="469.0" fill="#d6d6d6" text-anchor="end">2600</text>
<text x="22.4" y="484.8" fill="#d6d6d6" text-anchor="end">2400</text>
<text x="22.4" y="500.6" fill="#d6d6d6" text-anchor="end">2200</text>
<text x="22.4" y="516.4" fill="#d6d6d6" text-anchor="end">2000</text>
<text x="22.4" y="532.3" fill="#d6d6d6" text-anchor="end">1800</text>
<text x="22.4" y="548.1" fill="#d6d6d6" text-anchor="end">1600</text>
<text x="22.4" y="563.9" fill="#d6d6d6" text-anchor="end">1400</text>
<text x="22.4" y="579.7" fill="#d6d6d6" text-anchor="end">1200</text>
<text x="22.4" y="595.5" fill="#d6d6d6" text-anchor="end">1000</text>
<text x="22.4" y="611.4" fill="#d6d6d6" text-anchor="end">800</text>
<text x="22.4" y="627.2" fill="#d6d6d6" text-anchor="end">600</text>
<text x="25.0" y="641.4" fill="#d6d6d6" text-anchor="middle">700</text>
<text x="43.5" y="641.4" fill="#d6d6d6" text-anchor="middle">725</text>
<text x="62.1" y="641.4" fill="#d6d6d6" text-anchor="middle">750</text>
<text x="80.7" y="641.4" fill="#d6d6d6" text-anchor="middle">775</text>
<text x="99.2" y="641.4" fill="#d6d6d6" text-anchor="middle">800</text>
<text x="117.8" y="641.4" fill="#d6d6d6" text-anchor="middle">825</text>
<text x="136.4" y="641.4" fill="#d6d6d6" text-anchor="middle">850</text>
<text x="155.0" y="641.4" fill="#d6d6d6" text-anchor="middle">875</text>
<text x="173.5" y="641.4" fill="#d6d6d6" text-anchor="middle">900</text>
<text x="192.1" y="641.4" fill="#d6d6d6" text-anchor="middle">925</text>
<text x="210.7" y="641.4" fill="#d6d6d6" text-anchor="middle">950</text>
<text x="229.2" y="641.4" fill="#d6d6d6" text-anchor="middle">975</text>
<text x="247.8" y="641.4" fill="#d6d6d6" text-anchor="middle">1000</text>
<text x="266.4" y="641.4" fill="#d6d6d6" text-anchor="middle">1025</text>
<text x="284.9" y="641.4" fill="#d6d6d6" text-anchor="middle">1050</text>
<text x="303.5" y="641.4" fill="#d6d6d6" text-anchor="middle">1075</text>
<text x="322.1" y="641.4" fill="#d6d6d6" text-anchor="middle">1100</text>
<text x="340.7" y="641.4" fill="#d6d6d6" text-anchor="middle">1125</text>
<text x="359.2" y="641.4" fill="#d6d6d6" text-anchor="middle">1150</text>
<text x="377.8" y="641.4" fill="#d6d6d6" text-anchor="middle">1175</text>
<text x="396.4" y="641.4" fill="#d6d6d6" text-anchor="middle">1200</text>
<text x="414.9" y="641.4" fill="#d6d6d6" text-anchor="middle">1225</text>
<text x="433.5" y="641.4" fill="#d6d6d6" text-anchor="middle">1250</text>
<text x="434" y="651.6" fill="#d6d6d6" text-anchor="end">Voltage, mV</text>
<path d="M25.3 446.08H434" stroke="#56565a" stroke-width="0.65" stroke-dasharray="0.9 1.5" fill="none"/>
<polyline points="25.3,546.7 29.0,544.8 32.7,543.0 36.4,541.2 40.1,539.4 43.8,538.0 47.6,537.0 51.3,536.1 55.0,535.2 58.7,534.3 62.4,533.4 66.1,533.4 69.8,533.3 73.6,531.3 77.3,529.4 81.0,527.5 84.7,525.6 88.4,523.7 92.1,521.8 95.8,519.9 99.5,518.0 103.3,516.4 107.0,514.7 110.7,513.1 114.4,511.5 118.1,509.9 121.8,508.3 125.5,506.9 129.3,505.5 133.0,504.2 136.7,502.9 140.4,501.5 144.1,500.2 147.8,498.8 151.5,497.5 155.3,496.1 159.0,494.8 162.7,493.5 166.4,492.1 170.1,491.0 173.8,489.8 177.5,488.6 181.3,487.3 185.0,485.3 188.7,483.4 192.4,481.5 196.1,480.2 199.8,478.9 203.5,477.7 207.3,476.4 211.0,475.3 214.7,475.3 218.4,475.1 222.1,473.9 225.8,472.6 229.5,471.6 233.3,471.3 237.0,470.9 240.7,469.6 244.4,468.0 248.1,464.0 251.8,464.0 255.5,463.8 259.3,462.6 263.0,461.3 266.7,460.1 270.4,457.7 274.1,454.9 277.8,449.1 281.3,443.7 285.4,456.5 292.8,437.9 433.5,437.9" fill="none" stroke="#48484b" stroke-width="0.75"/>
<polyline points="25.3,554.6 29.0,552.8 32.7,550.9 40.1,547.3 43.8,545.9 47.6,545.0 51.3,544.0 58.7,542.2 62.4,541.3 66.1,541.3 69.8,541.2 77.3,537.3 81.0,535.4 84.7,533.5 88.4,531.6 95.8,527.8 99.5,525.9 103.3,524.3 107.0,522.7 114.4,519.4 118.1,517.8 121.8,516.2 125.5,514.8 133.0,512.1 136.7,510.8 140.4,509.4 144.1,508.1 151.5,505.4 155.3,504.1 159.0,502.7 162.7,501.4 170.1,498.9 173.8,497.7 177.5,496.5 181.3,495.2 188.7,491.3 192.4,489.4 196.1,488.1 199.8,486.9 207.3,484.3 211.0,483.2 214.7,483.2 218.4,483.0 225.8,480.6 229.5,479.5 233.3,479.2 237.0,478.8 244.4,476.0 248.1,471.9 251.8,471.9 255.5,471.7 263.0,469.2 266.7,468.0 270.4,465.6 274.1,462.8 277.8,457.0 281.5,450.7 284.9,446.1 292.2,446.1 295.9,446.1 299.6,446.1 303.2,446.1 310.7,446.1 314.4,446.1 318.2,446.1 321.8,446.1 329.3,446.1 333.0,446.1 336.7,446.1 340.4,446.1 347.9,446.1 351.6,446.1 355.3,446.1 358.9,446.1 366.4,446.1 370.2,446.1 373.9,446.1 377.5,446.1 385.0,446.1 388.7,446.1 392.4,446.1 396.1,446.1 403.6,446.1 407.3,446.1 411.0,446.1 414.6,446.1 422.1,446.1 425.9,446.1 433.3,446.1" fill="none" stroke="#7d7d80" stroke-width="0.85"/>
<path d="M23.8 553.1h3v3h-3zM27.5 551.3h3v3h-3zM31.2 549.4h3v3h-3zM38.6 545.8h3v3h-3zM42.3 544.4h3v3h-3zM46.1 543.5h3v3h-3zM49.8 542.5h3v3h-3zM57.2 540.7h3v3h-3zM60.9 539.8h3v3h-3zM64.6 539.8h3v3h-3zM68.3 539.7h3v3h-3zM75.8 535.8h3v3h-3zM79.5 533.9h3v3h-3zM83.2 532.0h3v3h-3zM86.9 530.1h3v3h-3zM94.3 526.3h3v3h-3zM98.0 524.4h3v3h-3zM101.8 522.8h3v3h-3zM105.5 521.2h3v3h-3zM112.9 517.9h3v3h-3zM116.6 516.3h3v3h-3zM120.3 514.7h3v3h-3zM124.0 513.3h3v3h-3zM131.5 510.6h3v3h-3zM135.2 509.3h3v3h-3zM138.9 507.9h3v3h-3zM142.6 506.6h3v3h-3zM150.0 503.9h3v3h-3zM153.8 502.6h3v3h-3zM157.5 501.2h3v3h-3zM161.2 499.9h3v3h-3zM168.6 497.4h3v3h-3zM172.3 496.2h3v3h-3zM176.0 495.0h3v3h-3zM179.8 493.7h3v3h-3zM187.2 489.8h3v3h-3zM190.9 487.9h3v3h-3zM194.6 486.6h3v3h-3zM198.3 485.4h3v3h-3zM205.8 482.8h3v3h-3zM209.5 481.7h3v3h-3zM213.2 481.7h3v3h-3zM216.9 481.5h3v3h-3zM224.3 479.1h3v3h-3zM228.0 478.0h3v3h-3zM231.8 477.7h3v3h-3zM235.5 477.3h3v3h-3zM242.9 474.5h3v3h-3zM246.6 470.4h3v3h-3zM250.3 470.4h3v3h-3zM254.0 470.2h3v3h-3zM261.5 467.7h3v3h-3zM265.2 466.5h3v3h-3zM268.9 464.1h3v3h-3zM272.6 461.3h3v3h-3zM276.3 455.5h3v3h-3zM280.0 449.2h3v3h-3zM283.4 444.6h3v3h-3zM290.7 444.6h3v3h-3zM294.4 444.6h3v3h-3zM298.1 444.6h3v3h-3zM301.7 444.6h3v3h-3zM309.2 444.6h3v3h-3zM312.9 444.6h3v3h-3zM316.7 444.6h3v3h-3zM320.3 444.6h3v3h-3zM327.8 444.6h3v3h-3zM331.5 444.6h3v3h-3zM335.2 444.6h3v3h-3zM338.9 444.6h3v3h-3zM346.4 444.6h3v3h-3zM350.1 444.6h3v3h-3zM353.8 444.6h3v3h-3zM357.4 444.6h3v3h-3zM364.9 444.6h3v3h-3zM368.7 444.6h3v3h-3zM372.4 444.6h3v3h-3zM376.0 444.6h3v3h-3zM383.5 444.6h3v3h-3zM387.2 444.6h3v3h-3zM390.9 444.6h3v3h-3zM394.6 444.6h3v3h-3zM402.1 444.6h3v3h-3zM405.8 444.6h3v3h-3zM409.5 444.6h3v3h-3zM413.1 444.6h3v3h-3zM420.6 444.6h3v3h-3zM424.4 444.6h3v3h-3z" fill="#808083"/>
</svg>
<div style="position:absolute;left:452.5px;top:359px;width:2.5px;height:59px;background:#1b1b1b"></div>
<div id="dlg" class="abs" style="left:454.2px;top:282.2px;width:184.6px;height:135.4px;background:#1f1f1f;border-radius:3px;box-shadow:0 2px 8px rgba(0,0,0,.35)">
<span class="t" id="d1" style="left:6.6px;top:8px;font-size:7.3px;color:#a4a4a4;letter-spacing:-0.05px">Super focusing</span>
<svg style="left:168px;top:6px" width="11" height="11" viewBox="0 0 11 11"><path d="M1.3 1.3l8.2 8.2M9.5 1.3l-8.2 8.2" stroke="#e4e4e4" stroke-width="0.9"/></svg>
<div style="left:0;top:21.2px;width:185px;height:0.7px;background:#2b2b2b"></div>
<svg style="left:6.100px;top:32px" width="10" height="10" viewBox="0 0 10 10"><path d="M2.6 2.4A3.8 3.8 0 0 0 2.6 7.6" fill="none" stroke="#f0f0f0" stroke-width="0.9"/><path d="M7.4 2.4A3.8 3.8 0 0 1 7.4 7.6" fill="none" stroke="#f0f0f0" stroke-width="0.9"/></svg>
<span class="t" id="d2" style="left:20.2px;top:34.2px;font-size:7.25px;color:#f2f2f2">Super focusing your image</span>
<div style="left:6.6px;top:50.7px;width:169px;height:2px;background:#1c3352;border-radius:1px"></div>
<div style="left:6.6px;top:50.7px;width:25px;height:2px;background:#3b93ff;border-radius:1px"></div>
<span class="t" id="d3" style="left:6.6px;top:63.6px;font-size:7.1px;color:#3c86e0;font-style:italic">About 24 minutes remaining...</span>
<svg style="left:6.300px;top:79.800px" width="8" height="8" viewBox="0 0 8 8"><path d="M4 1L7.3 6.9H0.7Z" fill="none" stroke="#e8b931" stroke-width="0.7" stroke-linejoin="round"/><path d="M4 3v2.2M4 5.8v.5" stroke="#e8b931" stroke-width="0.6"/></svg>
<span class="t" id="d4" style="left:15.700px;top:81.200px;font-size:7.05px;color:#e8b931">Large image could take longer to process.</span>
<div style="left:6.6px;top:106px;width:169px;height:20.5px;background:#ff1f5b;border-radius:2px"></div>
<span class="t" id="d5" style="left:78.900px;top:112.800px;font-size:7.3px;color:#fff">Cancel</span>
</div>
<div id="tm" class="abs" style="left:783.6px;top:46px;width:284.4px;height:322.7px;background:#f3f3f3;border-radius:4.5px;box-shadow:0 3px 10px rgba(0,0,0,.45),0 0 0 0.5px rgba(0,0,0,.35);overflow:hidden;color:#1b1b1b">
<div style="left:41.5px;top:5.4px;width:136px;height:18px;background:#f8f8f8;border-radius:2px"></div>
<svg style="left:0;top:0" width="284" height="30" viewBox="0 0 284 30"><path d="M9.6 10.2h8.4M9.6 13.4h8.4M9.6 16.6h8.4" stroke="#6a6a6a" stroke-width="0.8"/><rect x="31.8" y="10" width="9.4" height="6.9" rx="0.6" fill="#d6ebfa" stroke="#5aa6dc" stroke-width="0.7"/><path d="M32.6 15.2l1.3-2.6 1.1 1.6 1.2-3 1.2 2.6 1-1.4 1.2 2.2 .8-1" fill="none" stroke="#2f88cf" stroke-width="0.7"/><path d="M216.6 8.3h6" stroke="#9a9a9a" stroke-width="0.7"/><rect x="242.2" y="5.6" width="5.4" height="5.4" rx="0.8" fill="none" stroke="#9a9a9a" stroke-width="0.7"/><path d="M268.2 5.4l5.6 5.6M273.8 5.4l-5.6 5.6" stroke="#9a9a9a" stroke-width="0.7"/></svg>
<div style="left:0;top:30px;width:284.4px;height:293px;background:#fff;border-radius:4px 0 0 0;box-shadow:0 0 0 0.6px #e4e4e4"></div>
<span class="t" style="left:10px;top:41.2px;font-size:8.1px;color:#1a1a1a;-webkit-text-stroke:0.25px #1a1a1a">Leistung</span>
<svg style="left:165px;top:38.8px" width="12" height="12" viewBox="0 0 12 12"><path d="M2.2 2.2h6.2v3.6M2.2 2.2v7.4h3.4M2.2 4.6h6.2M5 2.2v7.4" fill="none" stroke="#333" stroke-width="0.75"/><circle cx="8.4" cy="8.6" r="2.3" fill="#222"/><path d="M8.4 7.4v2.4M7.2 8.6h2.4" stroke="#fff" stroke-width="0.6"/></svg>
<span class="t" style="left:179.6px;top:41.4px;font-size:6.9px;color:#1a1a1a;letter-spacing:-0.08px">Neuen Task ausführen</span>
<div style="left:255px;top:37.3px;width:0.7px;height:15px;background:#e0e0e0"></div>
<svg style="left:263px;top:41.8px" width="12" height="6" viewBox="0 0 12 6"><circle cx="2.6" cy="3" r="0.85" fill="#222"/><circle cx="6" cy="3" r="0.85" fill="#222"/><circle cx="9.4" cy="3" r="0.85" fill="#222"/></svg>
<div style="left:0;top:58px;width:284.4px;height:0.8px;background:#e6e6e6"></div>
<div style="left:3.2px;top:62.8px;width:274.6px;height:34px;background:#f3f3f3;border-radius:2px"></div>
<svg style="left:8.4px;top:69.4px" width="34.2" height="23.0" viewBox="0 0 34.2 23.0"><rect x="0.3" y="0.3" width="33.6" height="21.8" fill="#fff" stroke="#e2e2e2" stroke-width="0.6"/><rect x="0.3" y="0.3" width="33.6" height="21.8" fill="#f1f6fa"/><polygon points="0.6,22 0.6,15.1 1.6,11.6 2.5,12.6 3.5,20.4 4.5,16.8 5.5,10.1 6.4,20.4 7.4,16.4 8.4,13.7 9.3,11.6 10.3,20.4 11.3,18.7 12.2,8.3 13.2,16.7 14.2,20.4 15.2,14.3 16.1,6.5 17.1,10.9 18.1,16.2 19.0,9.9 20.0,4.3 21.0,20.4 22.0,17.3 22.9,10.0 23.9,17.0 24.9,20.4 25.8,14.1 26.8,3.9 27.8,19.4 28.7,16.6 29.7,7.6 30.7,17.9 31.7,17.1 32.6,20.4 33.6,13.0 33.6,22" fill="#d3e6f3"/><polyline points="0.6,15.1 1.6,11.6 2.5,12.6 3.5,20.4 4.5,16.8 5.5,10.1 6.4,20.4 7.4,16.4 8.4,13.7 9.3,11.6 10.3,20.4 11.3,18.7 12.2,8.3 13.2,16.7 14.2,20.4 15.2,14.3 16.1,6.5 17.1,10.9 18.1,16.2 19.0,9.9 20.0,4.3 21.0,20.4 22.0,17.3 22.9,10.0 23.9,17.0 24.9,20.4 25.8,14.1 26.8,3.9 27.8,19.4 28.7,16.6 29.7,7.6 30.7,17.9 31.7,17.1 32.6,20.4 33.6,13.0" fill="none" stroke="#1f88c8" stroke-width="0.9"/></svg>
<span class="t" style="left:48.2px;top:68.4px;font-size:9px;color:#1a1a1a;letter-spacing:-0.12px">CPU</span>
<span class="t" style="left:48.6px;top:80.3px;font-size:6.5px;color:#5e5e5e;letter-spacing:-0.12px">55%  3,71 GHz</span>
<svg style="left:8.4px;top:103.0px" width="34.2" height="23.0" viewBox="0 0 34.2 23.0"><rect x="0.3" y="0.3" width="33.6" height="21.8" fill="#fff" stroke="#e2e2e2" stroke-width="0.6"/><rect x="0.6" y="8.8" width="33" height="13.2" fill="#f4eef8"/><path d="M0.6 22V8.8H33.6" fill="none" stroke="#9a3fb8" stroke-width="0.8"/></svg>
<span class="t" style="left:48.2px;top:102.5px;font-size:9px;color:#1a1a1a;letter-spacing:-0.12px">Arbeitsspeicher</span>
<span class="t" style="left:48.6px;top:114.1px;font-size:6.5px;color:#5e5e5e;letter-spacing:-0.12px">19,1/31,9 GB (60%)</span>
<svg style="left:8.4px;top:137.8px" width="34.2" height="26.2" viewBox="0 0 34.2 26.2"><rect x="0.3" y="0.3" width="33.6" height="25.0" fill="#fff" stroke="#e2e2e2" stroke-width="0.6"/><path d="M0.6 24.6h4l.6-.5.6.5h6l.5-.6.6.6h8l.6-.7.6.7h7l.6-.5.5.5h3" fill="none" stroke="#6ab52a" stroke-width="0.7"/></svg>
<span class="t" style="left:48.2px;top:136.5px;font-size:9px;color:#1a1a1a;letter-spacing:-0.12px">Datenträger 0 (C:)</span>
<span class="t" style="left:48.6px;top:148.1px;font-size:6.5px;color:#5e5e5e;letter-spacing:-0.12px">SSD</span>
<span class="t" style="left:48.6px;top:156.4px;font-size:6.5px;color:#5e5e5e;letter-spacing:-0.12px">0%</span>
<svg style="left:8.4px;top:175.1px" width="34.2" height="26.2" viewBox="0 0 34.2 26.2"><rect x="0.3" y="0.3" width="33.6" height="25.0" fill="#fff" stroke="#e2e2e2" stroke-width="0.6"/><polygon points="0.6,25 0.6,21 1.6,23.5 2.6,20 3.4,24 4.4,22 5.6,24 6.6,4 7.6,24 9,22.5 10.4,24 11.6,14 12.6,24 14,23 15.6,24.2 17,23 18.6,24 19.6,4.6 20.6,24 22,23 24,24.2 26,23 28,24 30,23.2 31.6,22 32.6,6 33.4,14 33.6,25" fill="#a8d878" stroke="#5aae1e" stroke-width="0.7"/></svg>
<span class="t" style="left:48.2px;top:174.2px;font-size:9px;color:#1a1a1a;letter-spacing:-0.12px">Datenträger 1 (F:)</span>
<span class="t" style="left:48.6px;top:185.6px;font-size:6.5px;color:#5e5e5e;letter-spacing:-0.12px">SSD</span>
<span class="t" style="left:48.6px;top:193.9px;font-size:6.5px;color:#5e5e5e;letter-spacing:-0.12px">5%</span>
<svg style="left:8.4px;top:212.3px" width="34.2" height="26.2" viewBox="0 0 34.2 26.2"><rect x="0.3" y="0.3" width="33.6" height="25.0" fill="#fff" stroke="#e2e2e2" stroke-width="0.6"/></svg>
<span class="t" style="left:48.2px;top:211.7px;font-size:9px;color:#1a1a1a;letter-spacing:-0.12px">Datenträger 2 (D: G:)</span>
<span class="t" style="left:48.6px;top:223.0px;font-size:6.5px;color:#5e5e5e;letter-spacing:-0.12px">SSD</span>
<span class="t" style="left:48.6px;top:231.3px;font-size:6.5px;color:#5e5e5e;letter-spacing:-0.12px">0%</span>
<svg style="left:8.4px;top:249.8px" width="34.2" height="26.2" viewBox="0 0 34.2 26.2"><rect x="0.3" y="0.3" width="33.6" height="25.0" fill="#fff" stroke="#e2e2e2" stroke-width="0.6"/><polygon points="0.6,25.0 0.6,23.7 1.5,22.4 2.4,24.0 3.2,24.6 3.6,20.5 4.5,16.0 5.4,21.4 6.2,24.6 6.6,22.5 7.5,20.0 8.4,23.0 9.2,24.6 9.6,23.2 10.5,21.4 11.4,23.6 12.2,24.6 12.6,23.2 13.5,21.4 14.4,23.6 15.2,24.6 15.6,23.7 16.5,22.4 17.4,24.0 18.2,24.6 18.6,23.7 19.5,22.4 20.4,24.0 21.2,24.6 21.6,23.7 22.5,22.4 23.4,24.0 24.2,24.6 24.6,23.7 25.5,22.4 26.4,24.0 27.2,24.6 27.6,23.7 28.5,22.4 29.4,24.0 30.2,24.6 30.6,23.7 31.5,22.4 32.4,24.0 33.2,24.6 33.6,23.7 34.5,22.4 35.4,24.0 36.2,24.6 33.6,25.0" fill="#d8803a" stroke="#b8561a" stroke-width="0.5"/></svg>
<span class="t" style="left:48.2px;top:248.8px;font-size:9px;color:#1a1a1a;letter-spacing:-0.12px">WLAN</span>
<span class="t" style="left:48.6px;top:260.5px;font-size:6.5px;color:#5e5e5e;letter-spacing:-0.12px">WLAN</span>
<span class="t" style="left:48.6px;top:269.0px;font-size:6.5px;color:#5e5e5e;letter-spacing:-0.12px">Ges.: 0 Empf.: 0 KBit/s</span>
<svg style="left:8.4px;top:287.2px" width="34.2" height="26.2" viewBox="0 0 34.2 26.2"><rect x="0.3" y="0.3" width="33.6" height="25.0" fill="#fff" stroke="#e2e2e2" stroke-width="0.6"/><polygon points="0.6,25.3 0.6,5.6 2,5.2 3.4,5.8 5,5.4 7,5.9 9,5.3 11,5.8 13,5.4 15,5.8 17,5.2 19,5.7 21,5.3 23,5.6 25,4.8 27,5.6 29,5.2 30.5,5.4 32,7.6 33.6,7.8 33.6,25.3" fill="#e8f2fa"/><polyline points="0.6,25.3 0.6,5.6 2,5.2 3.4,5.8 5,5.4 7,5.9 9,5.3 11,5.8 13,5.4 15,5.8 17,5.2 19,5.7 21,5.3 23,5.6 25,4.8 27,5.6 29,5.2 30.5,5.4 32,7.6 33.6,7.8" fill="none" stroke="#2f8fd0" stroke-width="0.7"/></svg>
<span class="t" style="left:48.2px;top:286.0px;font-size:9px;color:#1a1a1a;letter-spacing:-0.12px">GPU 0</span>
<span class="t" style="left:48.6px;top:297.9px;font-size:6.5px;color:#5e5e5e;letter-spacing:-0.12px">NVIDIA GeForce RTX 4060 Ti</span>
<span class="t" style="left:48.6px;top:306.2px;font-size:6.5px;color:#5e5e5e;letter-spacing:-0.12px">72%  (81 °C)</span>
</div>
<div id="taskbar" class="abs"></div>
<svg id="tb" style="position:absolute;left:0;top:654px" width="1092" height="27" viewBox="0 654 1092 27" font-family="Liberation Sans, sans-serif">
<defs>
<linearGradient id="tbWin" x1="0" y1="0" x2="1" y2="1"><stop offset="0" stop-color="#39b4f4"/><stop offset="1" stop-color="#0a68d6"/></linearGradient>
<linearGradient id="tbSun" x1="0" y1="0" x2="0" y2="1"><stop offset="0" stop-color="#ffc23a"/><stop offset="1" stop-color="#f0761a"/></linearGradient>
<linearGradient id="tbEdge" x1="0" y1="0" x2="1" y2="1"><stop offset="0" stop-color="#2ec0a0"/><stop offset="0.5" stop-color="#1a8ad8"/><stop offset="1" stop-color="#0c58b0"/></linearGradient>
<linearGradient id="tbCop" x1="0" y1="0" x2="1" y2="1"><stop offset="0" stop-color="#3a7af0"/><stop offset="0.5" stop-color="#8a4ae0"/><stop offset="1" stop-color="#d060d0"/></linearGradient>
<radialGradient id="tbOne" cx="0.5" cy="0.5" r="0.5"><stop offset="0" stop-color="#0a0818"/><stop offset="0.72" stop-color="#0c0a20"/><stop offset="1" stop-color="#6a4ad8"/></radialGradient>
</defs>
<circle cx="18.6" cy="665.800" r="5.400" fill="url(#tbSun)"/>
<path d="M11.400 668.200h9.600a1 1 0 0 1 0 2h-9.600a1 1 0 0 1 0 -2zM13.200 671h10a1 1 0 0 1 0 2h-10a1 1 0 0 1 0 -2z" fill="#f08a24"/>
<g stroke="#fbe2ae" stroke-width="0.800" stroke-linecap="round"><path d="M18.600 663.800h4.600"/><path d="M17.400 666h5"/></g>
<text x="28.6" y="665.4" font-size="6.9" fill="#1f1f1f">3°C</text>
<text x="28.4" y="674.5" font-size="6.9" fill="#5a5a5a">Dunst</text>
<g fill="url(#tbWin)"><rect x="300.2" y="660.8" width="6.4" height="6.4" rx="0.5"/><rect x="307.3" y="660.8" width="6.4" height="6.4" rx="0.5"/><rect x="300.2" y="667.9" width="6.4" height="6.4" rx="0.5"/><rect x="307.3" y="667.9" width="6.4" height="6.4" rx="0.5"/></g>
<rect x="321.4" y="659" width="123.4" height="16.8" rx="8.4" fill="#faf6f4" stroke="#e2dcd8" stroke-width="0.5"/>
<circle cx="331" cy="666.6" r="2.6" fill="none" stroke="#2a2a2a" stroke-width="0.9"/><path d="M332.9 668.6l2.2 2.3" stroke="#2a2a2a" stroke-width="1"/>
<text x="341.9" y="669.8" font-size="7.2" fill="#6a6a6a">Suche</text>
<rect x="452.800" y="663" width="10.200" height="10.800" rx="0.800" fill="#1c1c1c"/><rect x="456.600" y="660.600" width="9.600" height="9.400" rx="0.800" fill="#f6f4f4" fill-opacity="0.880" stroke="#d8d2d0" stroke-width="0.400"/>
<g><circle cx="488.6" cy="662.8" r="2.2" fill="#5a62c8"/><rect x="485.4" y="665.4" width="6.4" height="7" rx="1.6" fill="#5a62c8"/><circle cx="483.4" cy="661.8" r="2.8" fill="#4a52b8"/><rect x="479.6" y="665" width="8.4" height="8.4" rx="1.8" fill="#4a52b8"/><rect x="477.4" y="663.6" width="7.4" height="7.4" rx="1" fill="#3f48a8"/><text x="481.1" y="669.8" font-size="5.6" font-weight="bold" fill="#fff" text-anchor="middle">T</text></g>
<path d="M502 661.6h4.6l1.4 1.6h8v3h-14z" fill="#e8a818"/><rect x="502" y="664" width="14" height="8.8" rx="0.8" fill="#fcd04a"/><rect x="505.4" y="669.4" width="7.2" height="3.4" fill="#2a80d8"/>
<rect x="507.4" y="676.8" width="3.2" height="1" rx="0.5" fill="#7a7a7a"/>
<circle cx="534" cy="667.2" r="6.8" fill="url(#tbEdge)"/><path d="M528.6 668.8a5.4 4.6 0 0 1 10.8 -1.6c0 2.2-2 2.8-3.6 2.4c-.6-2.6-3.2-3.8-5.4-2.6c-1 .6-1.6 1.2-1.8 1.8z" fill="#e8f6ff" opacity="0.85"/>
<path d="M556.400 662.600a2.600 2.200 0 0 1 5.200 0" fill="none" stroke="#2a7ad0" stroke-width="0.900"/><rect x="552.2" y="662.4" width="13.6" height="11" rx="1.4" fill="#1a62b8"/><rect x="555.6" y="664.8" width="3" height="3" fill="#f25022"/><rect x="559.4" y="664.8" width="3" height="3" fill="#7fba00"/><rect x="555.6" y="668.6" width="3" height="3" fill="#00a4ef"/><rect x="559.4" y="668.6" width="3" height="3" fill="#ffb900"/>
<circle cx="584" cy="667.2" r="6.8" fill="#e8402c"/><path d="M584 667.2L578.1 670.6A6.8 6.8 0 0 0 584 674L587.4 668.2Z" fill="#2ca84a"/><path d="M584 667.2l5.9 3.4A6.8 6.8 0 0 1 584 674L580.6 668.2" fill="#2ca84a" opacity="0"/><path d="M584 674A6.8 6.8 0 0 0 589.9 663.8H584Z" fill="#fbc116"/><path d="M584 674a6.8 6.8 0 0 1 -5.9 -3.4L581.4 665l2.6 2.2z" fill="#2ca84a"/><circle cx="584" cy="667.2" r="3.2" fill="#fff"/><circle cx="584" cy="667.2" r="2.5" fill="#3a7ee8"/>
<path d="M609 660.6c3.6 0 6.4 2 6.4 4.6c0 1.6-1 2.6-2.4 3.2c.6 3-1.6 5.4-4 5.4c-3.6 0-6.4-2-6.4-4.6c0-1.6 1-2.6 2.4-3.2c-.6-3 1.6-5.4 4-5.400z" fill="url(#tbCop)"/><circle cx="609" cy="667.2" r="2.2" fill="#f0ecfa"/>
<path d="M627.6 663.6c1.4-.8 3-.4 3.600 .6c2-1.200 5.400-1.400 7.600 .2c1.200 1 1.200 3 0 4.400l2 3.400-1.200 .8-2.400-2.800c-2.400 1.600-6 1-7.600-1.400c-1.400 .4-3-.2-3.400-1.600c-.4-1.400 .2-2.800 1.400-3.600z" fill="#6a6458"/><circle cx="631.6" cy="665.4" r="1.2" fill="#f4f0e4"/><circle cx="635.6" cy="665.2" r="1.200" fill="#f4f0e4"/><path d="M640 671.400l1.800 2.200" stroke="#3a3a3a" stroke-width="1"/>
<circle cx="659" cy="667.2" r="6.8" fill="url(#tbOne)"/><path d="M653.6 671.600a6.800 6.800 0 0 0 10 1" fill="none" stroke="#7a58f0" stroke-width="1.2" opacity="0.9"/><text x="659.4" y="670.600" font-size="9.400" fill="#fff" text-anchor="middle">1</text>
<circle cx="759" cy="667.2" r="6.8" fill="url(#tbOne)"/><path d="M753.6 671.600a6.800 6.800 0 0 0 10 1" fill="none" stroke="#7a58f0" stroke-width="1.2" opacity="0.9"/><text x="759.4" y="670.600" font-size="9.400" fill="#fff" text-anchor="middle">1</text>
<rect x="681.400" y="661" width="10" height="11.600" rx="1.200" fill="#2a8ae0"/><path d="M681.400 665.600l5 3.200 5-3.200v7h-10z" fill="#1a6ac8"/><rect x="677.200" y="663.400" width="8.600" height="8.600" rx="1.200" fill="#0f5cb8"/><text x="681.500" y="670.200" font-size="6.400" font-weight="bold" fill="#fff" text-anchor="middle">O</text>
<rect x="702.200" y="661.600" width="13.600" height="10.600" rx="0.800" fill="#e4f0fa" stroke="#8ab8dc" stroke-width="0.600"/><path d="M703 671.400l1.800-3 1.400 1.600 1.600-5.600 1.800 5 1.400-2.400 1.600 3.400 1.200-1.600 1.200 2.600z" fill="#7ab4e0" stroke="#3a8ad0" stroke-width="0.500"/>
<rect x="707.400" y="676.800" width="3.200" height="1" rx="0.500" fill="#7a7a7a"/>
<rect x="724.400" y="657" width="20.400" height="20.600" rx="2.400" fill="#fbfafa" stroke="#e6e2e0" stroke-width="0.400"/>
<circle cx="734" cy="667" r="6.400" fill="#1c1c1c"/><circle cx="734" cy="667" r="6.400" fill="none" stroke="#2ea83a" stroke-width="1.600" stroke-dasharray="6 4"/><path d="M729.600 662.600l6 6.800-1.200 .8zM738.600 662.800l-5.600 4 1.600 1.600zM731.200 668.400l-2 3.400 4-2.200z" fill="#e8e8e8"/>
<rect x="730" y="676.600" width="8" height="1.300" rx="0.650" fill="#1a6ed8"/>
<rect x="754.400" y="676.900" width="9.200" height="0.900" rx="0.450" fill="#c4c0c0"/>
<rect x="777.200" y="660.400" width="13.800" height="13.800" rx="2.600" fill="#0c0c10"/><rect x="781.400" y="665" width="6.400" height="5.800" rx="0.600" fill="none" stroke="#1a9af0" stroke-width="1.200"/><rect x="780" y="663.400" width="2.600" height="2.600" fill="#1a9af0"/>
<rect x="782.400" y="676.800" width="3.200" height="1" rx="0.500" fill="#7a7a7a"/>
<path d="M966.400 669l2.600-2.600 2.600 2.600" fill="none" stroke="#2a2a2a" stroke-width="0.900"/>
<g fill="none" stroke="#2a2a2a" stroke-width="0.900"><path d="M983.400 666.600a3.900 3.900 0 0 1 7-2.200"/><path d="M991.200 667.600a3.900 3.900 0 0 1 -7 2.400"/><path d="M990.600 662v2.600h-2.600M984 672.400v-2.600h2.600"/></g><circle cx="990" cy="670.300" r="2.300" fill="#f58a12"/>
<g fill="none" stroke="#4a4a4a" stroke-width="0.700"><path d="M1002 666.300a4.800 4.800 0 0 1 6.600 0"/><path d="M1003.200 667.700a3 3 0 0 1 4.200 0"/><path d="M1004.300 669a1.500 1.500 0 0 1 2 0"/></g><circle cx="1005.300" cy="670.400" r="0.700" fill="#4a4a4a"/>
<path d="M1014.600 666h1.800l2.400-2.200v7.400l-2.400-2.200h-1.800z" fill="none" stroke="#2a2a2a" stroke-width="0.800" stroke-linejoin="round"/><path d="M1020.400 665.400a3 3 0 0 1 0 4.200M1021.800 663.800a5.200 5.200 0 0 1 0 7.400" fill="none" stroke="#6a6a6a" stroke-width="0.700"/>
<text x="1065.700" y="665.300" font-size="6.550" fill="#1f1f1f" text-anchor="end">19:54</text>
<text x="1065.700" y="674.400" font-size="6.550" fill="#1f1f1f" text-anchor="end">12.12.2024</text>
<path d="M1074.600 662.600a3.300 3.300 0 0 1 3.300 3.300v2.600l1 1.600h-8.600l1-1.600v-2.600a3.300 3.300 0 0 1 3.300-3.300z" fill="#0c64d4"/><path d="M1073.400 671a1.300 1.300 0 0 0 2.400 0z" fill="#0c64d4"/>
</svg>
</div>
</body>
</html>
